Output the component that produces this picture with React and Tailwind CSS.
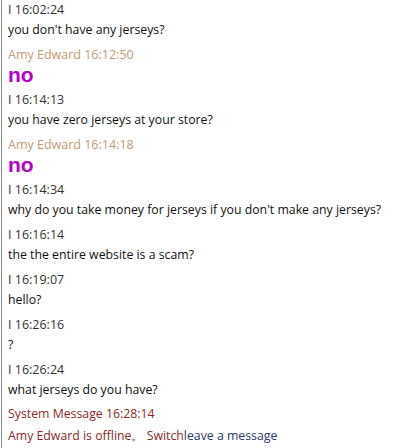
import React from 'react';

const messages = [
  { from: 'I', time: '16:02:24', text: "you don't have any jerseys?" },
  { from: 'Amy Edward', time: '16:12:50', text: 'no', agent: true },
  { from: 'I', time: '16:14:13', text: 'you have zero jerseys at your store?' },
  { from: 'Amy Edward', time: '16:14:18', text: 'no', agent: true },
  { from: 'I', time: '16:14:34', text: "why do you take money for jerseys if you don't make any jerseys?" },
  { from: 'I', time: '16:16:14', text: 'the the entire website is a scam?' },
  { from: 'I', time: '16:19:07', text: 'hello?' },
  { from: 'I', time: '16:26:16', text: '?' },
  { from: 'I', time: '16:26:24', text: 'what jerseys do you have?' },
];

export default function App() {
  return (
    <div className="w-[410px] h-[448px] bg-white overflow-hidden">
      <div className="ml-[1px] h-full border-l border-[#8a8a8a] pl-[6px] flex flex-col font-['Open_Sans',sans-serif]">
        {messages.map((m, i) => (
          <div key={i} className="flex flex-col">
            <div className={`text-[12.5px] leading-[20px] h-[20px] ${m.agent ? 'text-[#c49a74]' : 'text-[#333]'} ${i === 0 ? 'mt-0' : 'mt-[5px]'}`}>
              {m.from} {m.time}
            </div>
            {m.agent ? (
              <div className="text-[21px] leading-[20px] h-[20px] font-bold text-[#b400c8] font-['Liberation_Sans',sans-serif]">
                {m.text}
              </div>
            ) : (
              <div className="text-[12.3px] leading-[20px] h-[20px] text-[#111]">{m.text}</div>
            )}
          </div>
        ))}
        <div className="mt-[4px] text-[12.3px] leading-[20px] text-[#8b2a2a]">System Message 16:28:14</div>
        <div className="mt-[1px] text-[12.3px] leading-[22px] text-[#8b2a2a]">
          Amy Edward is offline。 Switch<span className="text-[#2c3a6a]">leave a message</span>
        </div>
      </div>
    </div>
  );
}
